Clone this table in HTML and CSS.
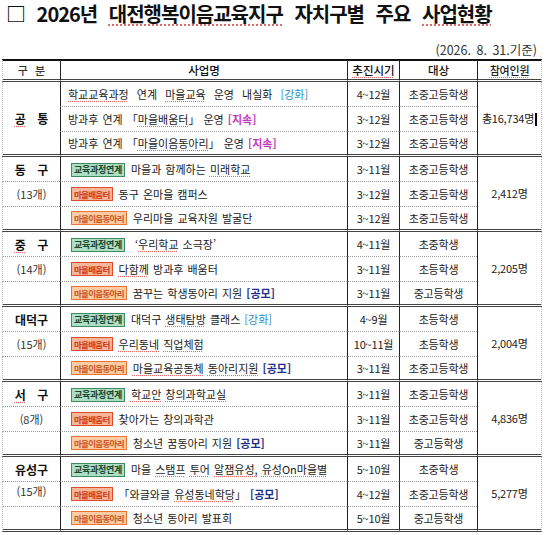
FILE: index.html
```html
<!DOCTYPE html>
<html lang="ko">
<head>
  <meta charset="UTF-8" />
  <meta name="viewport" content="width=device-width, initial-scale=1" />
  <title>2026년 대전행복이음교육지구 자치구별 주요 사업현황</title>
  <link rel="stylesheet" href="styles.css">
</head>
<body>

<h1 class="title">□ 2026년 <span class="sp">대전행복이음교육지구</span> 자치구별 주요 <span class="sp">사업현황</span></h1>
<p class="date">(2026. 8. 31.기준)</p>

<table class="status">
  <colgroup>
    <col style="width:58px">
    <col style="width:287px">
    <col style="width:52px">
    <col style="width:78px">
    <col style="width:65px">
  </colgroup>
  <thead>
    <tr>
      <th class="gu">구 분</th>
      <th class="name-h">사업명</th>
      <th class="when"><span class="sp">추진시기</span></th>
      <th class="who">대상</th>
      <th class="cnt"><span class="sp">참여인원</span></th>
    </tr>
  </thead>
  <tbody>
    <!-- 공통 -->
    <tr>
      <td class="gu span" rowspan="3"><b><span class="sp">공</span> 통</b></td>
      <td class="name wide"><span class="sp">학교교육과정</span> 연계 <span class="sp">마을교육</span> 운영 내실화 <span class="kh">[강화]</span></td>
      <td class="when">4~12월</td>
      <td class="who">초중고등학생</td>
      <td class="cnt span" rowspan="3">총16,734명<span class="caret"></span></td>
    </tr>
    <tr>
      <td class="name">방과후 연계 「<span class="sp">마을배움터</span>」 운영 <span class="js">[지속]</span></td>
      <td class="when">3~12월</td>
      <td class="who">초중고등학생</td>
    </tr>
    <tr class="end">
      <td class="name">방과후 연계 「<span class="sp">마을이음동아리</span>」 운영 <span class="js">[지속]</span></td>
      <td class="when">3~12월</td>
      <td class="who">초중고등학생</td>
    </tr>

    <!-- 동구 -->
    <tr>
      <td class="gu"><b>동 구</b></td>
      <td class="name"><span class="tag tag-g">교육과정연계</span>마을과 함께하는 <span class="sp">미래학교</span></td>
      <td class="when">3~11월</td>
      <td class="who">초중고등학생</td>
      <td class="cnt span" rowspan="3">2,412명</td>
    </tr>
    <tr>
      <td class="gu">(13개)</td>
      <td class="name"><span class="tag tag-r">마을배움터</span>동구 온마을 캠퍼스</td>
      <td class="when">3~12월</td>
      <td class="who">초중고등학생</td>
    </tr>
    <tr class="end">
      <td class="gu"></td>
      <td class="name"><span class="tag tag-o">마을이음동아리</span>우리마을 교육자원 발굴단</td>
      <td class="when">3~12월</td>
      <td class="who">초중고등학생</td>
    </tr>

    <!-- 중구 -->
    <tr>
      <td class="gu"><b><span class="sp">중</span> 구</b></td>
      <td class="name"><span class="tag tag-g">교육과정연계</span> ‘<span class="sp">우리학교</span> 소극장’</td>
      <td class="when">4~11월</td>
      <td class="who">초중학생</td>
      <td class="cnt span" rowspan="3">2,205명</td>
    </tr>
    <tr>
      <td class="gu">(14개)</td>
      <td class="name"><span class="tag tag-r">마을배움터</span><span class="sp">다함께</span> 방과후 배움터</td>
      <td class="when">3~11월</td>
      <td class="who">초등학생</td>
    </tr>
    <tr class="end">
      <td class="gu"></td>
      <td class="name"><span class="tag tag-o">마을이음동아리</span>꿈꾸는 학생동아리 지원 <span class="gm">[공모]</span></td>
      <td class="when">3~11월</td>
      <td class="who">중고등학생</td>
    </tr>

    <!-- 대덕구 -->
    <tr>
      <td class="gu"><b>대덕구</b></td>
      <td class="name"><span class="tag tag-g">교육과정연계</span>대덕구 <span class="sp">생태탐방</span> 클래스 <span class="kh">[강화]</span></td>
      <td class="when">4~9월</td>
      <td class="who">초등학생</td>
      <td class="cnt span" rowspan="3">2,004명</td>
    </tr>
    <tr>
      <td class="gu">(15개)</td>
      <td class="name"><span class="tag tag-r">마을배움터</span><span class="sp">우리동네</span> <span class="sp">직업체험</span></td>
      <td class="when">10~11월</td>
      <td class="who">초등학생</td>
    </tr>
    <tr class="end">
      <td class="gu"></td>
      <td class="name"><span class="tag tag-o">마을이음동아리</span><span class="sp">마을교육공동체</span> <span class="sp">동아리지원</span> <span class="gm">[공모]</span></td>
      <td class="when">3~11월</td>
      <td class="who">초중고등학생</td>
    </tr>

    <!-- 서구 -->
    <tr>
      <td class="gu"><b><span class="sp">서</span> 구</b></td>
      <td class="name"><span class="tag tag-g">교육과정연계</span><span class="sp">학교안</span> <span class="sp">창의과학교실</span></td>
      <td class="when">3~11월</td>
      <td class="who">초중고등학생</td>
      <td class="cnt span" rowspan="3">4,836명</td>
    </tr>
    <tr>
      <td class="gu">(8개)</td>
      <td class="name"><span class="tag tag-r">마을배움터</span>찾아가는 창의과학관</td>
      <td class="when">3~11월</td>
      <td class="who">초중고등학생</td>
    </tr>
    <tr class="end">
      <td class="gu"></td>
      <td class="name"><span class="tag tag-o">마을이음동아리</span>청소년 꿈동아리 지원 <span class="gm">[공모]</span></td>
      <td class="when">3~11월</td>
      <td class="who">중고등학생</td>
    </tr>

    <!-- 유성구 -->
    <tr>
      <td class="gu"><b>유성구</b></td>
      <td class="name"><span class="tag tag-g">교육과정연계</span>마을 <span class="sp">스탬프</span> <span class="sp">투어</span> <span class="sp">알잼유성,</span> <span class="sp">유성On마을별</span></td>
      <td class="when">5~10월</td>
      <td class="who">초중학생</td>
      <td class="cnt span" rowspan="3">5,277명</td>
    </tr>
    <tr>
      <td class="gu top">(15개)</td>
      <td class="name"><span class="tag tag-r">마을배움터</span>「와글와글 <span class="sp">유성동네학당</span>」 <span class="gm">[공모]</span></td>
      <td class="when">4~12월</td>
      <td class="who">초중고등학생</td>
    </tr>
    <tr class="end">
      <td class="gu"></td>
      <td class="name"><span class="tag tag-o">마을이음동아리</span>청소년 동아리 발표회</td>
      <td class="when">5~10월</td>
      <td class="who">중고등학생</td>
    </tr>
  </tbody>
</table>

</body>
</html>
```

FILE: styles.css
```css
* {
  margin: 0;
  padding: 0;
  box-sizing: border-box;
}

body {
  font-family: "Noto Sans CJK KR", "Noto Sans", sans-serif;
  color: #1a1a1a;
  background: #fff;
  width: 550px;
}

.title {
  height: 42px;
  padding: 1px 0 0 6px;
  font-size: 20px;
  line-height: 26px;
  font-weight: bold;
  letter-spacing: -1px;
  word-spacing: 7px;
  color: #111;
  white-space: nowrap;
}

.date {
  height: 16px;
  padding-right: 13px;
  text-align: right;
  font-size: 12.5px;
  line-height: 16px;
  word-spacing: 2px;
  color: #333;
}

/* spell-check style dotted underline */
.sp {
  text-decoration: underline dotted #e06a6a;
  text-underline-offset: 2px;
}

.status {
  margin: 1px 0 0 2px;
  width: 540px;
  table-layout: fixed;
  border-collapse: separate;
  border-spacing: 0;
  font-size: 11px;
}

.status th {
  height: 23px;
  font-size: 11.5px;
  font-weight: 500;
  text-align: center;
  border-top: 2px solid #111;
  border-bottom: 3px double #444;
  border-left: 1px solid #222;
  color: #111;
  white-space: nowrap;
}

.status th.gu {
  word-spacing: 4px;
}

.status td {
  height: 25px;
  padding: 0;
  text-align: center;
  vertical-align: middle;
  border-bottom: 1px dotted #999;
  border-left: 1px solid #222;
  white-space: nowrap;
}

.status tr.end td,
.status td.span {
  border-bottom: 3px double #444;
}

.status .gu {
  border-left: 1px dotted #bbb;
  font-size: 11px;
  color: #333;
}

.status .gu b {
  font-size: 12px;
  word-spacing: 8px;
  color: #111;
}

.status td.top {
  vertical-align: top;
  padding-top: 1px;
}

.status .cnt {
  border-right: 1px dotted #bbb;
  font-size: 11px;
  letter-spacing: -0.2px;
  color: #222;
}

.status td.name {
  text-align: left;
  padding-left: 7px;
  word-spacing: 1px;
  color: #1a1a1a;
}

.status td.wide {
  word-spacing: 5px;
}

.status td.when,
.status td.who {
  color: #222;
  letter-spacing: -0.2px;
}

.tag {
  display: inline-block;
  margin: 0 6px 0 3px;
  padding: 0 2px;
  border: 1px solid;
  font-size: 9px;
  line-height: 12px;
  font-weight: bold;
  letter-spacing: -0.3px;
  word-spacing: 0;
  vertical-align: 1px;
}

.tag-g {
  background: #abdec2;
  border-color: #3f8a5e;
  color: #1b4630;
}

.tag-r {
  background: #f6b699;
  border-color: #e0482a;
  color: #d13a18;
  font-size: 8.5px;
  letter-spacing: -0.7px;
}

.tag-o {
  background: #fbcca4;
  border-color: #e8743a;
  color: #cc5522;
  font-size: 8.5px;
  letter-spacing: -0.7px;
}

.kh {
  color: #2b8cc4;
}

.js {
  color: #c23cc0;
  font-weight: bold;
}

.gm {
  color: #1c2e8c;
  font-weight: bold;
}

.caret {
  display: inline-block;
  width: 2px;
  height: 13px;
  margin-left: 1px;
  background: #000;
  vertical-align: middle;
}
```
